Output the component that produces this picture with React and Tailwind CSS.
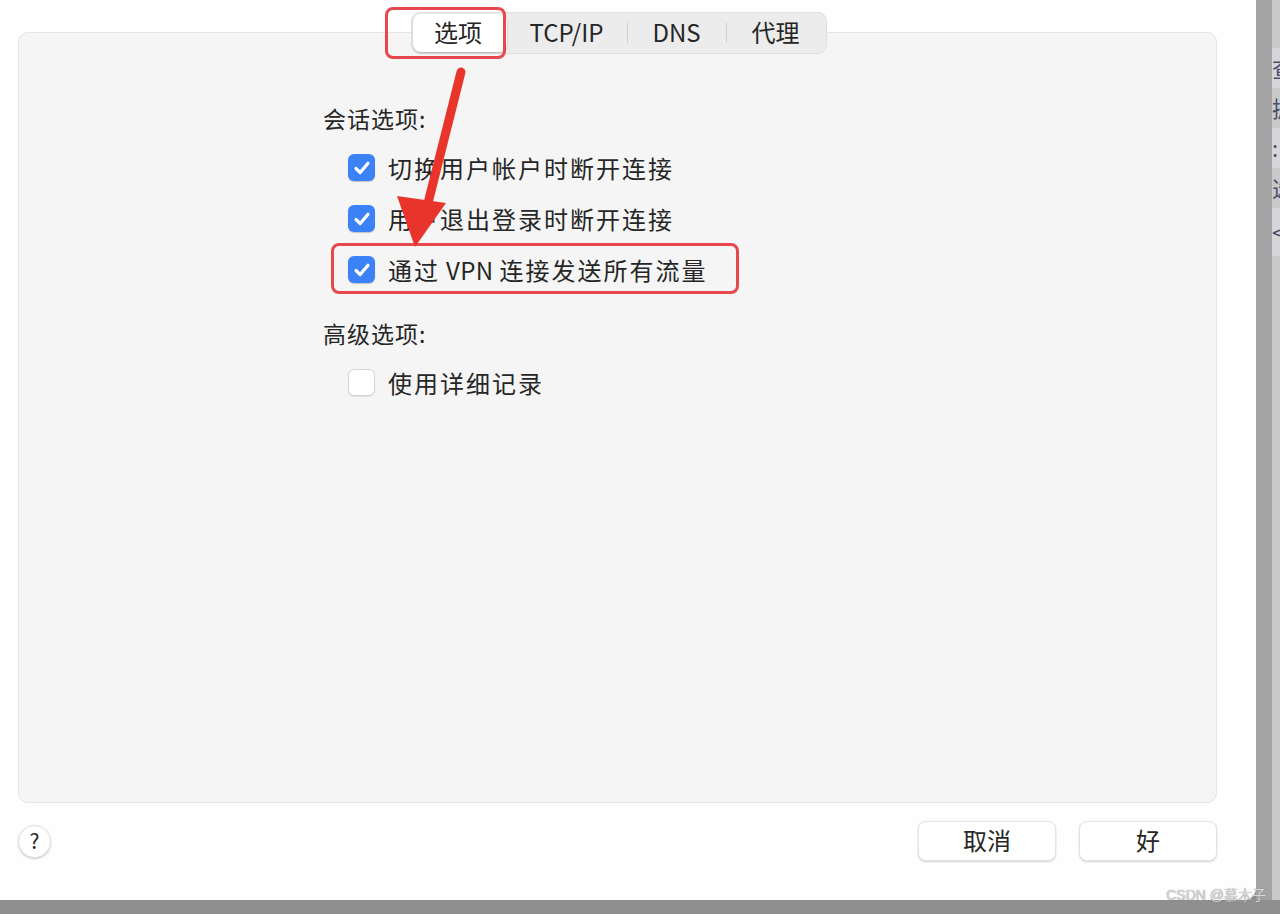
import React from "react";

const font = { fontFamily: '"Noto Sans CJK SC", "Noto Sans", sans-serif' };

function CheckRow({ checked, children }) {
  return (
    <div className="flex items-center h-[51px] pl-[25px]">
      {checked ? (
        <span className="flex items-center justify-center w-[27px] h-[27px] rounded-[6px] bg-[#3b82f6] shadow-[0_1px_1px_rgba(0,0,0,0.2)]">
          <svg width="20" height="20" viewBox="0 0 20 20">
            <path d="M4 10.5 L8.2 14.6 L16 5.2" fill="none" stroke="white" strokeWidth="3.2" strokeLinecap="round" strokeLinejoin="round" />
          </svg>
        </span>
      ) : (
        <span className="w-[27px] h-[27px] rounded-[6px] bg-white border border-[#d4d4d4] shadow-[0_1px_1px_rgba(0,0,0,0.08)]" />
      )}
      <span className="ml-[13px] text-[24px] tracking-[2px] text-[#262626]">{children}</span>
    </div>
  );
}

export default function App() {
  return (
    <div className="w-[1280px] h-[914px] overflow-hidden bg-[#8f8f8f] flex flex-col" style={font}>
      <div className="flex h-[900px]">
        <div className="relative w-[1256px] h-full bg-[#fefefe] rounded-br-[12px] flex flex-col pt-[12px] pl-[18px] pr-[39px]">
          {/* tabs */}
          <div className="relative z-10 self-center ml-[2px] flex items-center h-[42px] p-[1px] rounded-[9px] bg-[#ececec] border border-[#e0e0e0] text-[24px] text-[#262626]">
            <div className="flex items-center justify-center w-[94px] h-full pb-[2px] pr-[3px] rounded-[8px] bg-white shadow-[0_1px_2px_rgba(0,0,0,0.25)]">选项</div>
            <div className="w-[120px] pb-[2px] text-center">TCP/IP</div>
            <div className="w-px h-[20px] bg-[#cfcfcf]" />
            <div className="w-[98px] pb-[2px] text-center">DNS</div>
            <div className="w-px h-[20px] bg-[#cfcfcf]" />
            <div className="w-[98px] pb-[2px] text-center">代理</div>
          </div>
          {/* panel */}
          <div className="-mt-[22px] h-[771px] rounded-[10px] bg-[#f5f5f5] border border-[#e4e4e4] pl-[304px] pt-[69px] text-[#262626]">
            <div className="text-[23px] leading-[32px] tracking-[1px]">会话选项:</div>
            <div className="mt-[8px]">
              <CheckRow checked>切换用户帐户时断开连接</CheckRow>
              <CheckRow checked>用户退出登录时断开连接</CheckRow>
              <CheckRow checked>
                通过<span className="tracking-[0.5px]"> VPN </span>连接发送所有流量
              </CheckRow>
            </div>
            <div className="mt-[22px] text-[23px] leading-[32px] tracking-[1px]">高级选项:</div>
            <div className="mt-[8px]">
              <CheckRow>使用详细记录</CheckRow>
            </div>
          </div>
          {/* footer */}
          <div className="flex items-center mt-[18px]">
            <div className="flex items-center justify-center w-[33px] h-[33px] rounded-full bg-white border border-[#e2e2e2] shadow-[0_1px_2px_rgba(0,0,0,0.2)] text-[21px] text-[#262626]">?</div>
            <div className="ml-auto flex gap-[23px]">
              <div className="flex items-center justify-center w-[138px] h-[40px] pb-[2px] rounded-[8px] bg-white border border-[#e4e4e4] shadow-[0_1px_2px_rgba(0,0,0,0.18)] text-[24px] text-[#262626]">取消</div>
              <div className="flex items-center justify-center w-[138px] h-[40px] pb-[2px] rounded-[8px] bg-white border border-[#e4e4e4] shadow-[0_1px_2px_rgba(0,0,0,0.18)] text-[24px] text-[#262626]">好</div>
            </div>
          </div>

          {/* annotations */}
          <div className="absolute left-[385px] top-[7px] w-[121px] h-[52px] rounded-[8px] border-[3px] border-[#e8474d] z-20" />
          <div className="absolute left-[331px] top-[243px] w-[408px] h-[51px] rounded-[8px] border-[3px] border-[#e8474d] z-20" />
          <svg className="absolute left-0 top-0 z-20" width="600" height="300">
            <path d="M461 72 L425 215" stroke="#e8342b" strokeWidth="9" strokeLinecap="round" />
            <path d="M415 247 L397 196 L446 203 Z" fill="#e8342b" />
          </svg>
        </div>
        <div className="w-[16px] h-full bg-[#a3a3a3]" />
        <div className="w-[8px] h-full bg-[#c9c9cc] flex flex-col text-[22px] leading-none text-[#4a4f6e] overflow-hidden">
          <div className="mt-[48px] bg-[#d6d6da] h-[40px] pt-[8px]">查</div>
          <div className="h-[40px] pt-[8px]">据</div>
          <div className="bg-[#d6d6da] h-[40px] pt-[8px]">:</div>
          <div className="h-[40px] pt-[8px]">选</div>
          <div className="bg-[#d6d6da] h-[48px] pt-[12px]">&lt;</div>
        </div>
      </div>
      <div className="relative h-[14px] bg-[#8f8f8f]">
        <div className="absolute right-[14px] -top-[15px] text-[14px] text-[#d8d8d8]" style={{ fontFamily: '"Liberation Sans", "Noto Sans CJK SC", sans-serif', textShadow: "0 0 1px #777" }}>
          CSDN @慕木子
        </div>
      </div>
    </div>
  );
}
